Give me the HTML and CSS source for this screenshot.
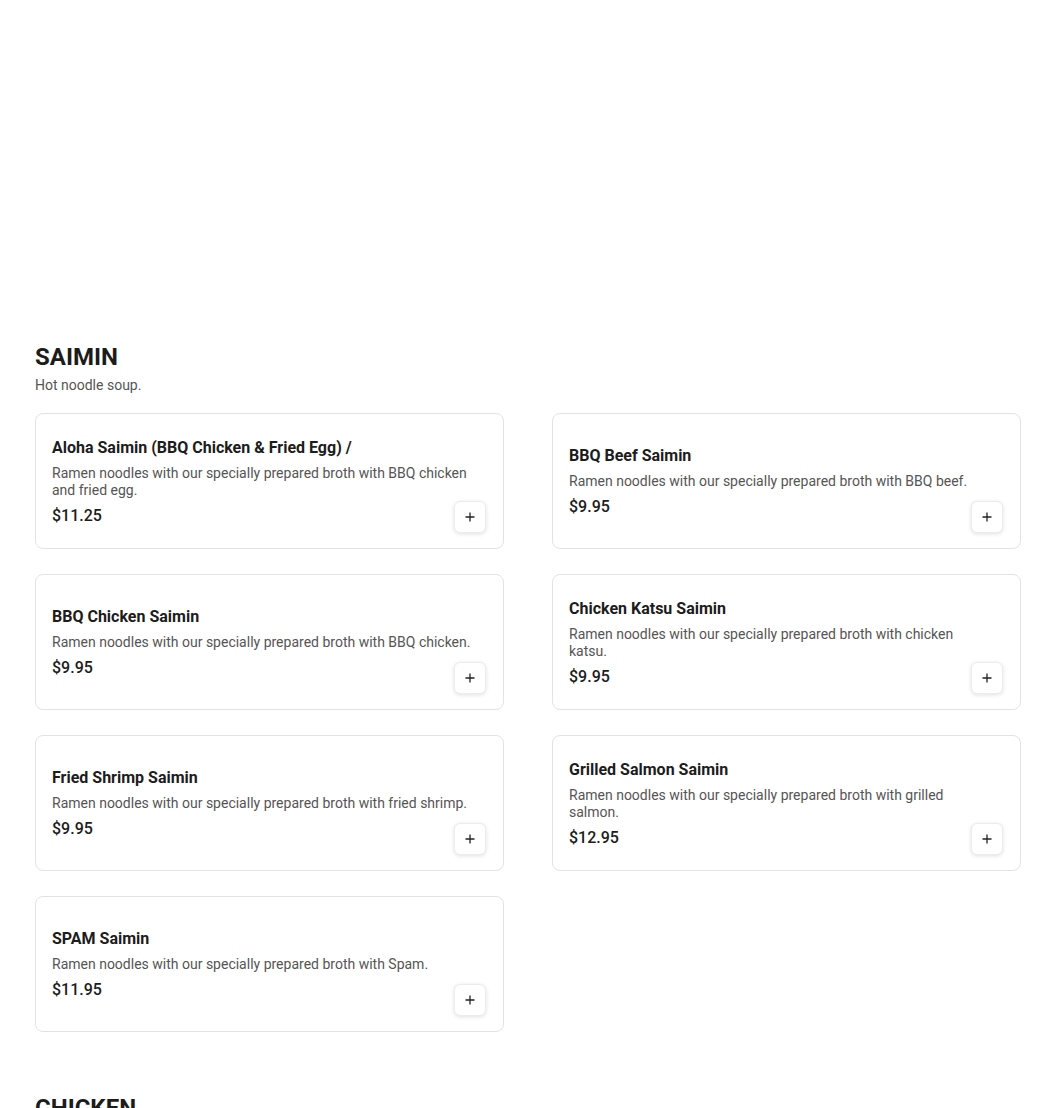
FILE: index.html
```html
<!DOCTYPE html>
<html lang="en">
<head>
<meta charset="utf-8">
<title>Menu</title>
<link rel="stylesheet" href="styles.css">
</head>
<body>
<main class="menu">
  <section class="category">
    <h2 class="cat-title">SAIMIN</h2>
    <p class="cat-desc">Hot noodle soup.</p>
    <div class="grid">
      <div class="card">
        <div class="info">
          <h3 class="name">Aloha Saimin (BBQ Chicken &amp; Fried Egg) /</h3>
          <p class="desc">Ramen noodles with our specially prepared broth with BBQ chicken and fried egg.</p>
          <div class="price">$11.25</div>
        </div>
        <button class="add" aria-label="Add"><svg width="12" height="12" viewBox="0 0 12 12"><path d="M6 1.5v9M1.5 6h9" stroke="#222" stroke-width="1.3"/></svg></button>
      </div>
      <div class="card">
        <div class="info">
          <h3 class="name">BBQ Beef Saimin</h3>
          <p class="desc">Ramen noodles with our specially prepared broth with BBQ beef.</p>
          <div class="price">$9.95</div>
        </div>
        <button class="add" aria-label="Add"><svg width="12" height="12" viewBox="0 0 12 12"><path d="M6 1.5v9M1.5 6h9" stroke="#222" stroke-width="1.3"/></svg></button>
      </div>
      <div class="card">
        <div class="info">
          <h3 class="name">BBQ Chicken Saimin</h3>
          <p class="desc">Ramen noodles with our specially prepared broth with BBQ chicken.</p>
          <div class="price">$9.95</div>
        </div>
        <button class="add" aria-label="Add"><svg width="12" height="12" viewBox="0 0 12 12"><path d="M6 1.5v9M1.5 6h9" stroke="#222" stroke-width="1.3"/></svg></button>
      </div>
      <div class="card">
        <div class="info">
          <h3 class="name">Chicken Katsu Saimin</h3>
          <p class="desc">Ramen noodles with our specially prepared broth with chicken katsu.</p>
          <div class="price">$9.95</div>
        </div>
        <button class="add" aria-label="Add"><svg width="12" height="12" viewBox="0 0 12 12"><path d="M6 1.5v9M1.5 6h9" stroke="#222" stroke-width="1.3"/></svg></button>
      </div>
      <div class="card">
        <div class="info">
          <h3 class="name">Fried Shrimp Saimin</h3>
          <p class="desc">Ramen noodles with our specially prepared broth with fried shrimp.</p>
          <div class="price">$9.95</div>
        </div>
        <button class="add" aria-label="Add"><svg width="12" height="12" viewBox="0 0 12 12"><path d="M6 1.5v9M1.5 6h9" stroke="#222" stroke-width="1.3"/></svg></button>
      </div>
      <div class="card">
        <div class="info">
          <h3 class="name">Grilled Salmon Saimin</h3>
          <p class="desc">Ramen noodles with our specially prepared broth with grilled salmon.</p>
          <div class="price">$12.95</div>
        </div>
        <button class="add" aria-label="Add"><svg width="12" height="12" viewBox="0 0 12 12"><path d="M6 1.5v9M1.5 6h9" stroke="#222" stroke-width="1.3"/></svg></button>
      </div>
      <div class="card">
        <div class="info">
          <h3 class="name">SPAM Saimin</h3>
          <p class="desc">Ramen noodles with our specially prepared broth with Spam.</p>
          <div class="price">$11.95</div>
        </div>
        <button class="add" aria-label="Add"><svg width="12" height="12" viewBox="0 0 12 12"><path d="M6 1.5v9M1.5 6h9" stroke="#222" stroke-width="1.3"/></svg></button>
      </div>
    </div>
  </section>
  <section class="category">
    <h2 class="cat-title">CHICKEN</h2>
  </section>
</main>
</body>
</html>
```
FILE: styles.css
```css
* { box-sizing: border-box; }
html, body { margin: 0; padding: 0; background: #fff; }
body {
  font-family: Roboto, "Noto Sans", Arial, sans-serif;
  color: #1c1c1c;
}
.menu {
  padding: 343px 29px 0 35px;
}
.category { margin-bottom: 62px; }
.cat-title {
  margin: 0;
  font-size: 24px;
  line-height: 28px;
  font-weight: 700;
  color: #1c1c1c;
}
.cat-desc {
  margin: 6px 0 0;
  font-size: 14px;
  line-height: 17px;
  color: #555;
}
.grid {
  margin-top: 19px;
  display: grid;
  grid-template-columns: 1fr 1fr;
  column-gap: 48px;
  row-gap: 25px;
}
.card {
  position: relative;
  height: 136px;
  border: 1px solid #e3e3e3;
  border-radius: 8px;
  padding: 0 30px 0 16px;
  display: flex;
  background: #fff;
}
.info {
  flex: 1;
  display: flex;
  flex-direction: column;
  justify-content: center;
  min-width: 0;
  padding-top: 1px;
}
.name {
  margin: 0 0 7px;
  font-size: 16px;
  line-height: 20px;
  font-weight: 700;
  color: #1c1c1c;
}
.desc {
  margin: 0 0 7px;
  font-size: 14px;
  line-height: 17px;
  color: #555;
}
.price {
  font-size: 16px;
  line-height: 20px;
  font-weight: 500;
  color: #1c1c1c;
}
.add {
  position: absolute;
  right: 17px;
  bottom: 15px;
  width: 32px;
  height: 32px;
  padding: 0;
  border: 1px solid #ececec;
  border-radius: 6px;
  background: #fff;
  box-shadow: 0 1px 4px rgba(0,0,0,0.12);
  display: flex;
  align-items: center;
  justify-content: center;
  cursor: pointer;
}
.add svg { display: block; }
```
